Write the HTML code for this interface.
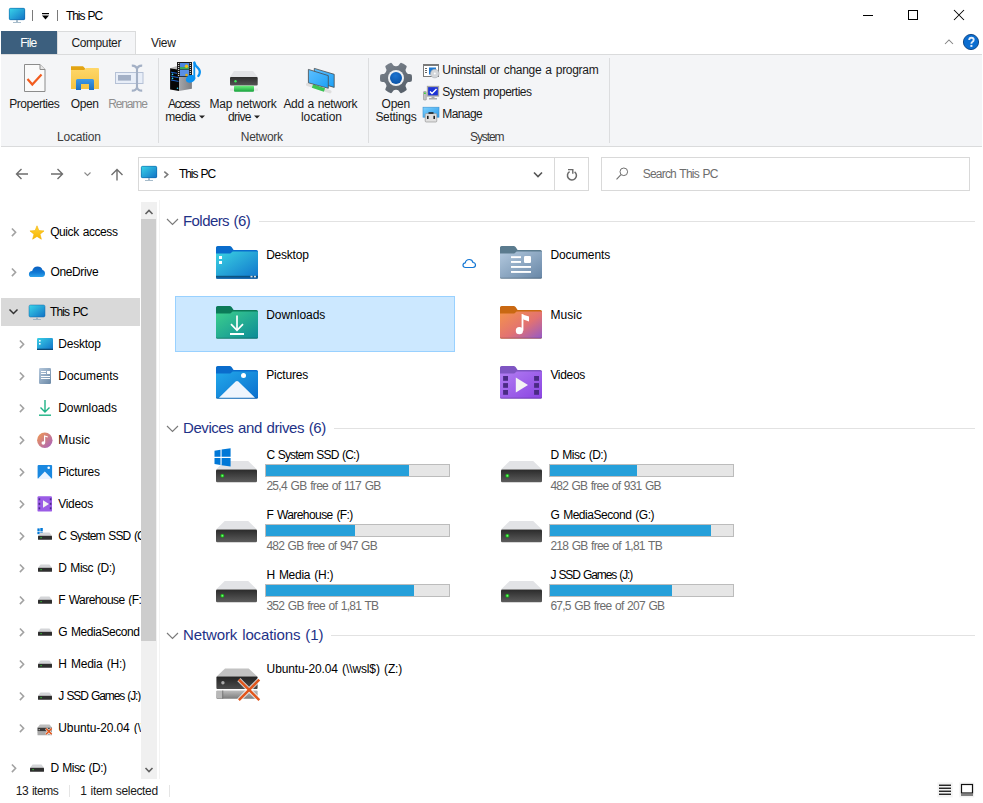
<!DOCTYPE html>
<html><head><meta charset="utf-8">
<style>
*{margin:0;padding:0;box-sizing:border-box}
html,body{width:983px;height:803px;overflow:hidden;background:#fff}
body{position:relative;font-family:"Liberation Sans",sans-serif;font-size:12px;color:#000}
.a{position:absolute}
.t{position:absolute;white-space:nowrap;font-family:"Liberation Sans",sans-serif}
svg{position:absolute;overflow:visible}
</style></head><body>
<svg style="left:0px;top:0px" width="120" height="30" viewBox="0 0 120 30">
<defs><linearGradient id="pcg" x1="0" y1="0" x2="1" y2="1"><stop offset="0" stop-color="#3ad6ea"/><stop offset="1" stop-color="#1170c4"/></linearGradient></defs>
<rect x="9" y="8" width="16" height="12" rx="1.5" fill="url(#pcg)"/>
<rect x="9.3" y="8.3" width="15.4" height="11.4" rx="1.3" fill="none" stroke="#1468a8" stroke-width="0.6"/>
<rect x="16" y="20" width="2" height="2" fill="#a7bccb"/>
<rect x="13" y="22" width="8" height="1" fill="#a7bccb"/>
<rect x="32" y="10" width="1" height="11" fill="#7a7a7a"/>
<rect x="42" y="13" width="7" height="1.2" fill="#000"/>
<path d="M42 15.5 L49 15.5 L45.5 19.5 Z" fill="#000"/>
<rect x="57" y="10" width="1" height="11" fill="#7a7a7a"/>
</svg>
<div class="t" style="left:66.00px;top:10px;font-size:12px;line-height:12px;color:#000;letter-spacing:-1.083px;word-spacing:1.00px;">This PC</div>
<svg style="left:850px;top:0px" width="133" height="30" viewBox="0 0 133 30">
<rect x="13" y="15" width="10" height="1" fill="#000"/>
<rect x="58.5" y="10.5" width="9" height="9" fill="none" stroke="#000" stroke-width="1"/>
<path d="M104 10 L114 20 M114 10 L104 20" stroke="#000" stroke-width="1.05"/>
</svg>
<div class="a" style="left:1px;top:31px;width:56px;height:23px;background:#3c5f7e;"></div>
<div class="t" style="left:20.30px;top:37px;font-size:12px;line-height:12px;color:#fff;letter-spacing:-0.833px;">File</div>
<div class="a" style="left:57px;top:31px;width:79px;height:24px;background:#f4f5f7;border:1px solid #dadbdc;border-bottom:none;"></div>
<div class="t" style="left:71.40px;top:37px;font-size:12px;line-height:12px;color:#1a1a1a;letter-spacing:-0.386px;">Computer</div>
<div class="t" style="left:151.00px;top:37px;font-size:12px;line-height:12px;color:#1a1a1a;letter-spacing:-0.333px;">View</div>
<svg style="left:930px;top:30px" width="53" height="24" viewBox="0 0 53 24">
<path d="M15 14 L19 10 L23 14" fill="none" stroke="#808080" stroke-width="1.05"/>
<circle cx="41" cy="12" r="7.6" fill="#0b6dd0" stroke="#083f80" stroke-width="0.9"/>
<path d="M39.2 10.1 Q39.2 7.7 41.4 7.7 Q43.7 7.7 43.7 9.8 Q43.7 11.2 42.3 12 Q41.4 12.5 41.4 13.8" fill="none" stroke="#e4eefa" stroke-width="1.9"/>
<rect x="40.4" y="14.9" width="2" height="2" fill="#e4eefa"/>
</svg>
<div class="a" style="left:1px;top:54px;width:981px;height:93px;background:#f4f5f7;border-top:1px solid #dadbdc;border-bottom:1px solid #dadbdc;"></div>
<div class="a" style="left:158px;top:58px;width:1px;height:85px;background:#dcdddf;"></div>
<div class="a" style="left:368px;top:58px;width:1px;height:85px;background:#dcdddf;"></div>
<div class="a" style="left:609px;top:58px;width:1px;height:85px;background:#dcdddf;"></div>
<svg style="left:20px;top:58px" width="30" height="40" viewBox="0 0 30 40">
<path d="M4.5 6.5 H20 L25 11.5 V33.5 H4.5 Z" fill="#fafafa" stroke="#8c8c8c" stroke-width="1"/>
<path d="M20 6.5 V11.5 H25" fill="#e6e6e6" stroke="#8c8c8c" stroke-width="1"/>
<path d="M7.5 21 L12.3 26.5 L21.5 16.5" fill="none" stroke="#f25c1e" stroke-width="2.2"/>
</svg>
<svg style="left:68px;top:62px" width="34" height="30" viewBox="0 0 34 30">
<defs><linearGradient id="opg" x1="0" y1="0" x2="0" y2="1"><stop offset="0" stop-color="#ffd76a"/><stop offset="1" stop-color="#f5c342"/></linearGradient>
<linearGradient id="opb" x1="0" y1="0" x2="0" y2="1"><stop offset="0" stop-color="#3e9ae8"/><stop offset="1" stop-color="#1f6fc0"/></linearGradient></defs>
<path d="M3 4.2 H15 L17.2 6.4 V8.5 H3 Z" fill="#e3a412"/>
<path d="M3 8 H16 L18.3 6 H30 Q31 6 31 7 V26.9 H3 Z" fill="url(#opg)"/>
<path d="M8 28 V18.5 Q8 17 9.5 17 H24.5 Q26 17 26 18.5 V28 H21 V22 H13 V28 Z" fill="url(#opb)"/>
</svg>
<svg style="left:112px;top:62px" width="34" height="32" viewBox="0 0 34 32">
<rect x="3.5" y="10.5" width="27.5" height="11" fill="#e8eef8" stroke="#b5c1d6" stroke-width="1"/>
<rect x="6" y="13" width="13" height="5.6" fill="#a3b0c6"/>
<path d="M19.8 3.6 Q24 3.4 25 7 Q26 3.4 30.2 3.6 M19.8 28.6 Q24 28.8 25 25.2 Q26 28.8 30.2 28.6 M25 6 V26" stroke="#a3b0c5" stroke-width="2.1" fill="none"/>
</svg>
<div class="t" style="left:9.30px;top:98px;font-size:12px;line-height:12px;color:#1a1a1a;letter-spacing:-0.478px;">Properties</div>
<div class="t" style="left:70.80px;top:98px;font-size:12px;line-height:12px;color:#1a1a1a;letter-spacing:-0.433px;">Open</div>
<div class="t" style="left:108.30px;top:98px;font-size:12px;line-height:12px;color:#8f8f8f;letter-spacing:-1.160px;">Rename</div>
<div class="t" style="left:57.00px;top:131px;font-size:12px;line-height:12px;color:#3b3b3b;letter-spacing:-0.200px;">Location</div>
<svg style="left:164px;top:58px" width="42" height="40" viewBox="0 0 42 40">
<defs><linearGradient id="amside" x1="0" y1="0" x2="1" y2="0"><stop offset="0" stop-color="#a4a6aa"/><stop offset="1" stop-color="#7c7e83"/></linearGradient></defs>
<path d="M6.1 10.2 L12 8.2 L27.9 9.5 L15.1 11.8 Z" fill="#b8b8b8"/>
<path d="M6.1 10.2 L15.1 11.8 L15.1 33.1 L6.1 31.5 Z" fill="#060606"/>
<path d="M15.1 11.8 L27.9 9.5 L27.9 30.7 L15.1 33.1 Z" fill="url(#amside)"/>
<path d="M7 14.2 L14.5 15.6 M7 18.2 L14.5 19.6 M7 22 L14.5 23.4" stroke="#1f6de0" stroke-width="0.9"/>
<circle cx="8.5" cy="16.4" r="0.8" fill="#36d2f5"/><circle cx="8.5" cy="20.4" r="0.8" fill="#36d2f5"/><circle cx="13.5" cy="30.3" r="0.8" fill="#36d2f5"/>
<rect x="13" y="4" width="15" height="15" fill="#1b1b1b"/>
<rect x="14.2" y="5" width="1" height="1" fill="#fff"/><rect x="14.2" y="7" width="1" height="1" fill="#fff"/><rect x="14.2" y="9" width="1" height="1" fill="#fff"/><rect x="14.2" y="11" width="1" height="1" fill="#fff"/><rect x="14.2" y="13" width="1" height="1" fill="#fff"/><rect x="14.2" y="15" width="1" height="1" fill="#fff"/><rect x="14.2" y="17" width="1" height="1" fill="#fff"/>
<rect x="25.8" y="5" width="1" height="1" fill="#fff"/><rect x="25.8" y="7" width="1" height="1" fill="#fff"/><rect x="25.8" y="9" width="1" height="1" fill="#fff"/><rect x="25.8" y="11" width="1" height="1" fill="#fff"/><rect x="25.8" y="13" width="1" height="1" fill="#fff"/><rect x="25.8" y="15" width="1" height="1" fill="#fff"/>
<rect x="16" y="5" width="9" height="6.3" fill="#4a86e0"/><rect x="16" y="12" width="9" height="6.2" fill="#5a90e4"/>
<rect x="16" y="9" width="9" height="2.3" fill="#3aa860"/><circle cx="22.5" cy="8.3" r="1.7" fill="#f0c010"/><circle cx="22.5" cy="17" r="1.3" fill="#e0b010"/>
<ellipse cx="26.6" cy="20.8" rx="4.9" ry="3.7" transform="rotate(-22 26.6 20.8)" fill="#0a92f2"/>
<rect x="29.4" y="4.2" width="1.8" height="17" fill="#0a92f2"/>
<path d="M30.3 4.5 Q31 7.5 34 10 Q36.5 12.5 35.6 15.5 Q35.2 17 34.3 18" fill="none" stroke="#0a92f2" stroke-width="2.3" stroke-linecap="round"/>
</svg>
<div class="t" style="left:168.00px;top:98px;font-size:12px;line-height:12px;color:#1a1a1a;letter-spacing:-1.280px;">Access</div>
<div class="t" style="left:165.30px;top:111px;font-size:12px;line-height:12px;color:#1a1a1a;letter-spacing:-0.500px;">media</div>
<svg style="left:197px;top:114px" width="10" height="6" viewBox="0 0 10 6"><path d="M2 1.5 H8 L5 4.5 Z" fill="#222"/></svg>
<svg style="left:226px;top:66px" width="36" height="30" viewBox="0 0 36 30">
<defs><linearGradient id="mnd" x1="0" y1="0" x2="0" y2="1"><stop offset="0" stop-color="#2e2e2e"/><stop offset="1" stop-color="#555"/></linearGradient>
<linearGradient id="mng" x1="0" y1="0" x2="0" y2="1"><stop offset="0" stop-color="#6cf07c"/><stop offset="1" stop-color="#16a03c"/></linearGradient></defs>
<path d="M8 5 H27 L31.7 11 H4 Z" fill="#e2e3e6"/>
<rect x="4" y="11" width="27.7" height="8.5" rx="1" fill="url(#mnd)"/>
<circle cx="9.5" cy="15.3" r="1.2" fill="#3ee85a"/>
<rect x="4" y="22.5" width="28" height="2.5" fill="#e8e8e8"/>
<rect x="8" y="19.8" width="20" height="6" rx="1" fill="url(#mng)"/>
</svg>
<div class="t" style="left:209.60px;top:98px;font-size:12px;line-height:12px;color:#1a1a1a;letter-spacing:-0.260px;word-spacing:1.00px;">Map network</div>
<div class="t" style="left:228.00px;top:111px;font-size:12px;line-height:12px;color:#1a1a1a;letter-spacing:-0.625px;">drive</div>
<svg style="left:252px;top:114px" width="10" height="6" viewBox="0 0 10 6"><path d="M2 1.5 H8 L5 4.5 Z" fill="#222"/></svg>
<svg style="left:302px;top:62px" width="40" height="34" viewBox="0 0 40 34">
<defs><linearGradient id="anl" x1="0" y1="0" x2="1" y2="1"><stop offset="0" stop-color="#5cc0ff"/><stop offset="0.5" stop-color="#3fb0fb"/><stop offset="1" stop-color="#1aa0f5"/></linearGradient></defs>
<path d="M12.3 6.4 L32.2 12.3 L32.2 25.4 L12.3 19.5 Z" fill="url(#anl)" stroke="#4a4a4a" stroke-width="0.8"/>
<path d="M5.5 22.6 L28 29.8" stroke="#dedede" stroke-width="3.2" stroke-linecap="round"/>
<path d="M10.5 24 L22.5 28" stroke="#3cc455" stroke-width="3.8"/>
<path d="M6.4 7.4 L26.3 13.6 L26.3 26.3 L6.4 20.8 Z" fill="url(#anl)" stroke="#4a4a4a" stroke-width="0.8"/>
</svg>
<div class="t" style="left:283.50px;top:98px;font-size:12px;line-height:12px;color:#1a1a1a;letter-spacing:-0.400px;word-spacing:1.00px;">Add a network</div>
<div class="t" style="left:301.00px;top:111px;font-size:12px;line-height:12px;color:#1a1a1a;letter-spacing:-0.057px;">location</div>
<div class="t" style="left:240.80px;top:131px;font-size:12px;line-height:12px;color:#3b3b3b;letter-spacing:-0.300px;">Network</div>
<svg style="left:378px;top:60px" width="36" height="36" viewBox="0 0 36 36">
<defs><linearGradient id="gear" x1="0" y1="0" x2="0.6" y2="1"><stop offset="0" stop-color="#7d858f"/><stop offset="1" stop-color="#58616b"/></linearGradient>
<radialGradient id="gb" cx="0.45" cy="0.3" r="0.75"><stop offset="0" stop-color="#1d74d0"/><stop offset="1" stop-color="#0a52a6"/></radialGradient></defs>
<path d="M34.00 18.00 L34.00 18.28 L33.99 18.56 L33.98 18.84 L33.96 19.12 L33.94 19.39 L33.91 19.67 L33.88 19.95 L33.84 20.23 L33.80 20.50 L33.76 20.78 L33.71 21.05 L33.56 21.31 L33.25 21.52 L32.78 21.69 L32.22 21.81 L31.60 21.90 L30.99 21.97 L30.42 22.04 L29.96 22.12 L29.64 22.24 L29.48 22.41 L29.32 22.58 L29.16 22.74 L29.01 22.90 L28.86 23.06 L28.71 23.22 L28.57 23.39 L28.45 23.55 L28.33 23.72 L28.22 23.90 L28.12 24.08 L28.03 24.27 L27.95 24.46 L27.88 24.66 L27.81 24.87 L27.75 25.08 L27.69 25.30 L27.62 25.52 L27.56 25.74 L27.49 25.96 L27.55 26.30 L27.71 26.74 L27.93 27.26 L28.18 27.83 L28.41 28.41 L28.58 28.96 L28.67 29.44 L28.65 29.82 L28.50 30.08 L28.28 30.26 L28.07 30.43 L27.85 30.61 L27.63 30.78 L27.40 30.94 L27.18 31.11 L26.95 31.26 L26.71 31.42 L26.48 31.57 L26.24 31.71 L26.00 31.86 L25.76 31.99 L25.51 32.13 L25.26 32.26 L25.01 32.38 L24.76 32.50 L24.51 32.62 L24.25 32.73 L23.99 32.83 L23.73 32.94 L23.47 33.04 L23.21 33.13 L22.92 33.13 L22.57 32.96 L22.20 32.65 L21.81 32.22 L21.42 31.73 L21.05 31.23 L20.72 30.78 L20.41 30.42 L20.15 30.20 L19.92 30.15 L19.70 30.09 L19.48 30.04 L19.26 29.98 L19.04 29.93 L18.83 29.89 L18.62 29.85 L18.41 29.82 L18.21 29.81 L18.00 29.80 L17.79 29.81 L17.59 29.82 L17.38 29.85 L17.17 29.89 L16.96 29.93 L16.74 29.98 L16.52 30.04 L16.30 30.09 L16.08 30.15 L15.85 30.20 L15.59 30.42 L15.28 30.78 L14.95 31.23 L14.58 31.73 L14.19 32.22 L13.80 32.65 L13.43 32.96 L13.08 33.13 L12.79 33.13 L12.53 33.04 L12.27 32.94 L12.01 32.83 L11.75 32.73 L11.49 32.62 L11.24 32.50 L10.99 32.38 L10.74 32.26 L10.49 32.13 L10.24 31.99 L10.00 31.86 L9.76 31.71 L9.52 31.57 L9.29 31.42 L9.05 31.26 L8.82 31.11 L8.60 30.94 L8.37 30.78 L8.15 30.61 L7.93 30.43 L7.72 30.26 L7.50 30.08 L7.35 29.82 L7.33 29.44 L7.42 28.96 L7.59 28.41 L7.82 27.83 L8.07 27.26 L8.29 26.74 L8.45 26.30 L8.51 25.96 L8.44 25.74 L8.38 25.52 L8.31 25.30 L8.25 25.08 L8.19 24.87 L8.12 24.66 L8.05 24.46 L7.97 24.27 L7.88 24.08 L7.78 23.90 L7.67 23.72 L7.55 23.55 L7.43 23.39 L7.29 23.22 L7.14 23.06 L6.99 22.90 L6.84 22.74 L6.68 22.58 L6.52 22.41 L6.36 22.24 L6.04 22.12 L5.58 22.04 L5.01 21.97 L4.40 21.90 L3.78 21.81 L3.22 21.69 L2.75 21.52 L2.44 21.31 L2.29 21.05 L2.24 20.78 L2.20 20.50 L2.16 20.23 L2.12 19.95 L2.09 19.67 L2.06 19.39 L2.04 19.12 L2.02 18.84 L2.01 18.56 L2.00 18.28 L2.00 18.00 L2.00 17.72 L2.01 17.44 L2.02 17.16 L2.04 16.88 L2.06 16.61 L2.09 16.33 L2.12 16.05 L2.16 15.77 L2.20 15.50 L2.24 15.22 L2.29 14.95 L2.44 14.69 L2.75 14.48 L3.22 14.31 L3.78 14.19 L4.40 14.10 L5.01 14.03 L5.58 13.96 L6.04 13.88 L6.36 13.76 L6.52 13.59 L6.68 13.42 L6.84 13.26 L6.99 13.10 L7.14 12.94 L7.29 12.78 L7.43 12.61 L7.55 12.45 L7.67 12.28 L7.78 12.10 L7.88 11.92 L7.97 11.73 L8.05 11.54 L8.12 11.34 L8.19 11.13 L8.25 10.92 L8.31 10.70 L8.38 10.48 L8.44 10.26 L8.51 10.04 L8.45 9.70 L8.29 9.26 L8.07 8.74 L7.82 8.17 L7.59 7.59 L7.42 7.04 L7.33 6.56 L7.35 6.18 L7.50 5.92 L7.72 5.74 L7.93 5.57 L8.15 5.39 L8.37 5.22 L8.60 5.06 L8.82 4.89 L9.05 4.74 L9.29 4.58 L9.52 4.43 L9.76 4.29 L10.00 4.14 L10.24 4.01 L10.49 3.87 L10.74 3.74 L10.99 3.62 L11.24 3.50 L11.49 3.38 L11.75 3.27 L12.01 3.17 L12.27 3.06 L12.53 2.96 L12.79 2.87 L13.08 2.87 L13.43 3.04 L13.80 3.35 L14.19 3.78 L14.58 4.27 L14.95 4.77 L15.28 5.22 L15.59 5.58 L15.85 5.80 L16.08 5.85 L16.30 5.91 L16.52 5.96 L16.74 6.02 L16.96 6.07 L17.17 6.11 L17.38 6.15 L17.59 6.18 L17.79 6.19 L18.00 6.20 L18.21 6.19 L18.41 6.18 L18.62 6.15 L18.83 6.11 L19.04 6.07 L19.26 6.02 L19.48 5.96 L19.70 5.91 L19.92 5.85 L20.15 5.80 L20.41 5.58 L20.72 5.22 L21.05 4.77 L21.42 4.27 L21.81 3.78 L22.20 3.35 L22.57 3.04 L22.92 2.87 L23.21 2.87 L23.47 2.96 L23.73 3.06 L23.99 3.17 L24.25 3.27 L24.51 3.38 L24.76 3.50 L25.01 3.62 L25.26 3.74 L25.51 3.87 L25.76 4.01 L26.00 4.14 L26.24 4.29 L26.48 4.43 L26.71 4.58 L26.95 4.74 L27.18 4.89 L27.40 5.06 L27.63 5.22 L27.85 5.39 L28.07 5.57 L28.28 5.74 L28.50 5.92 L28.65 6.18 L28.67 6.56 L28.58 7.04 L28.41 7.59 L28.18 8.17 L27.93 8.74 L27.71 9.26 L27.55 9.70 L27.49 10.04 L27.56 10.26 L27.62 10.48 L27.69 10.70 L27.75 10.92 L27.81 11.13 L27.88 11.34 L27.95 11.54 L28.03 11.73 L28.12 11.92 L28.22 12.10 L28.33 12.28 L28.45 12.45 L28.57 12.61 L28.71 12.78 L28.86 12.94 L29.01 13.10 L29.16 13.26 L29.32 13.42 L29.48 13.59 L29.64 13.76 L29.96 13.88 L30.42 13.96 L30.99 14.03 L31.60 14.10 L32.22 14.19 L32.78 14.31 L33.25 14.48 L33.56 14.69 L33.71 14.95 L33.76 15.22 L33.80 15.50 L33.84 15.77 L33.88 16.05 L33.91 16.33 L33.94 16.61 L33.96 16.88 L33.98 17.16 L33.99 17.44 L34.00 17.72 Z" fill="url(#gear)"/>
<circle cx="18" cy="18" r="8.0" fill="#eef0f2"/>
<circle cx="18" cy="18" r="6.0" fill="url(#gb)"/>
</svg>
<div class="t" style="left:381.60px;top:98px;font-size:12px;line-height:12px;color:#1a1a1a;letter-spacing:-0.300px;">Open</div>
<div class="t" style="left:375.40px;top:111px;font-size:12px;line-height:12px;color:#1a1a1a;letter-spacing:-0.286px;">Settings</div>
<svg style="left:420px;top:62px" width="22" height="62" viewBox="0 0 22 62">
<rect x="3.5" y="2.5" width="15" height="12" fill="#fff" stroke="#7a7a7a" stroke-width="1"/>
<rect x="3" y="2" width="16" height="2" fill="#7a7a7a"/>
<rect x="5" y="6" width="2" height="1" fill="#666"/><rect x="5" y="8" width="2" height="1" fill="#666"/><rect x="5" y="10" width="2" height="1" fill="#666"/>
<rect x="9" y="5.5" width="7" height="7" fill="#1e78d0"/>
<circle cx="14.8" cy="11.6" r="4.3" fill="#d3d6da" stroke="#a0a5aa" stroke-width="0.5"/>
<circle cx="14.8" cy="11.6" r="1" fill="#fff"/>
<rect x="3.5" y="29.5" width="2.8" height="8.5" rx="0.5" fill="#c4c4c4" stroke="#808080" stroke-width="0.5"/>
<rect x="4" y="30.5" width="1.8" height="1.5" fill="#3ecf3e"/>
<rect x="7.5" y="24.5" width="11" height="9.5" fill="#1c32d6" stroke="#a8a8a8" stroke-width="1.3"/>
<path d="M10 29.5 L12 31.5 L16.5 27" stroke="#fff" stroke-width="1.4" fill="none"/>
<rect x="11.5" y="34.5" width="3" height="1.5" fill="#aaa"/>
<rect x="9" y="36" width="8" height="1.5" fill="#aaa"/>
<defs><linearGradient id="mgs" x1="0" y1="0" x2="1" y2="1"><stop offset="0" stop-color="#7fd2ff"/><stop offset="1" stop-color="#2b9ae8"/></linearGradient></defs>
<rect x="3" y="45.2" width="16" height="10" fill="url(#mgs)" stroke="#3a8fd0" stroke-width="0.6"/>
<rect x="5.2" y="51.6" width="11.6" height="8.4" rx="1" fill="#e0e0e0" stroke="#8a8a8a" stroke-width="0.6"/>
<rect x="8.5" y="50.2" width="5" height="1.6" fill="#222"/>
<rect x="7" y="53.8" width="1.6" height="3.2" fill="#222"/><rect x="13.4" y="53.8" width="1.6" height="3.2" fill="#222"/>
</svg>
<div class="t" style="left:442.30px;top:64px;font-size:12px;line-height:12px;color:#1a1a1a;letter-spacing:-0.300px;word-spacing:1.00px;">Uninstall or change a program</div>
<div class="t" style="left:442.30px;top:86px;font-size:12px;line-height:12px;color:#1a1a1a;letter-spacing:-0.500px;word-spacing:1.00px;">System properties</div>
<div class="t" style="left:442.30px;top:108px;font-size:12px;line-height:12px;color:#1a1a1a;letter-spacing:-0.600px;">Manage</div>
<div class="t" style="left:470.00px;top:131px;font-size:12px;line-height:12px;color:#3b3b3b;letter-spacing:-1.080px;">System</div>
<svg style="left:0px;top:150px" width="135" height="45" viewBox="0 0 135 45">
<path d="M16.5 24 H28 M21.5 19 L16.5 24 L21.5 29" fill="none" stroke="#6e6e6e" stroke-width="1.4"/>
<path d="M51 24 H62.5 M57.5 19 L62.5 24 L57.5 29" fill="none" stroke="#6e6e6e" stroke-width="1.4"/>
<path d="M84.5 22.5 L87.5 25.5 L90.5 22.5" fill="none" stroke="#8a8a8a" stroke-width="1.1"/>
<path d="M117 19.5 V30.5 M111.5 25 L117 19.5 L122.5 25" fill="none" stroke="#6e6e6e" stroke-width="1.4"/>
</svg>
<div class="a" style="left:138px;top:157px;width:451px;height:34px;background:#fff;border:1px solid #d9d9d9;"></div>
<div class="a" style="left:554px;top:158px;width:1px;height:32px;background:#d9d9d9;"></div>
<svg style="left:138px;top:157px" width="90" height="34" viewBox="0 0 90 34">
<defs><linearGradient id="pcg2" x1="0" y1="0" x2="1" y2="1"><stop offset="0" stop-color="#3ad6ea"/><stop offset="1" stop-color="#1170c4"/></linearGradient></defs>
<rect x="3" y="9" width="16" height="12" rx="1.5" fill="url(#pcg2)"/>
<rect x="3.3" y="9.3" width="15.4" height="11.4" rx="1.3" fill="none" stroke="#1468a8" stroke-width="0.6"/>
<rect x="10" y="21" width="2" height="2" fill="#a7bccb"/>
<rect x="7" y="23" width="8" height="1" fill="#a7bccb"/>
<path d="M26.3 14.6 L29.8 17.6 L26.3 20.6" fill="none" stroke="#7a7a7a" stroke-width="1.5"/>
</svg>
<div class="t" style="left:179.00px;top:168px;font-size:12px;line-height:12px;color:#000;letter-spacing:-1.083px;word-spacing:1.00px;">This PC</div>
<svg style="left:520px;top:157px" width="70" height="34" viewBox="0 0 70 34">
<path d="M14 15.5 L18 19.5 L22 15.5" fill="none" stroke="#555" stroke-width="1.6"/>
<path d="M54.6 14.8 A4.5 4.5 0 1 1 49.6 14.6" fill="none" stroke="#6a6a6a" stroke-width="1.5"/>
<path d="M48 12.6 H52.8 V16.8" fill="none" stroke="#6a6a6a" stroke-width="1.4"/>
</svg>
<div class="a" style="left:601px;top:157px;width:369px;height:34px;background:#fff;border:1px solid #d9d9d9;"></div>
<svg style="left:610px;top:160px" width="24" height="26" viewBox="0 0 24 26">
<circle cx="13.8" cy="11.8" r="3.8" fill="none" stroke="#707070" stroke-width="1"/>
<path d="M11 14.6 L6.5 19.3" stroke="#707070" stroke-width="1.1"/>
</svg>
<div class="t" style="left:642.70px;top:168px;font-size:12px;line-height:12px;color:#6d6d6d;letter-spacing:-0.785px;word-spacing:1.00px;">Search This PC</div>
<div class="a" style="left:141px;top:202px;width:16px;height:577px;background:#f0f0f0;"></div>
<div class="a" style="left:141px;top:219px;width:15px;height:422px;background:#cdcdcd;"></div>
<svg style="left:141px;top:202px" width="16" height="577" viewBox="0 0 16 577">
<path d="M4.5 12 L8 8.5 L11.5 12" fill="none" stroke="#606060" stroke-width="1.6"/>
<path d="M4.5 566 L8 569.5 L11.5 566" fill="none" stroke="#606060" stroke-width="1.6"/>
</svg>
<div class="a" style="left:159px;top:200px;width:1px;height:579px;background:#f3f3f3;"></div>
<div class="a" style="left:1px;top:298px;width:139px;height:28px;background:#d9d9d9;"></div>
<svg style="left:0px;top:0px" width="141" height="803" viewBox="0 0 141 803"><path d="M11.9 228.5 L15.6 232.3 L11.9 236.10000000000002" fill="none" stroke="#a2a2a2" stroke-width="1.6"/><path d="M11.9 268.5 L15.6 272.3 L11.9 276.1" fill="none" stroke="#a2a2a2" stroke-width="1.6"/><path d="M11.9 764.5 L15.6 768.3 L11.9 772.0999999999999" fill="none" stroke="#a2a2a2" stroke-width="1.6"/><path d="M9.5 309.5 L13.5 313.5 L17.5 309.5" fill="none" stroke="#333" stroke-width="1.5"/><path d="M19.9 340.5 L23.6 344.3 L19.9 348.1" fill="none" stroke="#a2a2a2" stroke-width="1.6"/><path d="M19.9 372.5 L23.6 376.3 L19.9 380.1" fill="none" stroke="#a2a2a2" stroke-width="1.6"/><path d="M19.9 404.5 L23.6 408.3 L19.9 412.1" fill="none" stroke="#a2a2a2" stroke-width="1.6"/><path d="M19.9 436.5 L23.6 440.3 L19.9 444.1" fill="none" stroke="#a2a2a2" stroke-width="1.6"/><path d="M19.9 468.5 L23.6 472.3 L19.9 476.1" fill="none" stroke="#a2a2a2" stroke-width="1.6"/><path d="M19.9 500.5 L23.6 504.3 L19.9 508.1" fill="none" stroke="#a2a2a2" stroke-width="1.6"/><path d="M19.9 532.5 L23.6 536.3 L19.9 540.0999999999999" fill="none" stroke="#a2a2a2" stroke-width="1.6"/><path d="M19.9 564.5 L23.6 568.3 L19.9 572.0999999999999" fill="none" stroke="#a2a2a2" stroke-width="1.6"/><path d="M19.9 596.5 L23.6 600.3 L19.9 604.0999999999999" fill="none" stroke="#a2a2a2" stroke-width="1.6"/><path d="M19.9 628.5 L23.6 632.3 L19.9 636.0999999999999" fill="none" stroke="#a2a2a2" stroke-width="1.6"/><path d="M19.9 660.5 L23.6 664.3 L19.9 668.0999999999999" fill="none" stroke="#a2a2a2" stroke-width="1.6"/><path d="M19.9 692.5 L23.6 696.3 L19.9 700.0999999999999" fill="none" stroke="#a2a2a2" stroke-width="1.6"/><path d="M19.9 724.5 L23.6 728.3 L19.9 732.0999999999999" fill="none" stroke="#a2a2a2" stroke-width="1.6"/></svg>
<svg style="left:0px;top:0px" width="141" height="803" viewBox="0 0 141 803"><defs><linearGradient id="star" x1="0" y1="0" x2="0" y2="1"><stop offset="0" stop-color="#ffd43b"/><stop offset="1" stop-color="#f7b500"/></linearGradient></defs><path d="M37.00 225.80 L38.88 230.61 L44.04 230.91 L40.04 234.19 L41.35 239.19 L37.00 236.40 L32.65 239.19 L33.96 234.19 L29.96 230.91 L35.12 230.61 Z" fill="url(#star)" stroke="#f2b200" stroke-width="0.6" stroke-linejoin="round"/><defs><linearGradient id="od" x1="0" y1="0" x2="0" y2="1"><stop offset="0" stop-color="#0a5fc0"/><stop offset="0.55" stop-color="#0f78d4"/><stop offset="1" stop-color="#2ea2ea"/></linearGradient></defs><path d="M31.4 277 Q28.9 277 28.9 274.2 Q28.9 271.3 32.1 270.9 Q33.5 266.6 37.6 266.6 Q41.2 266.6 42.5 269.9 Q45 270.4 45 273.6 Q45 277 42 277 Z" fill="url(#od)"/><defs><linearGradient id="pcg3" x1="0" y1="0" x2="1" y2="1"><stop offset="0" stop-color="#3ad6ea"/><stop offset="1" stop-color="#1170c4"/></linearGradient></defs><rect x="29" y="305" width="16" height="12" rx="1.5" fill="url(#pcg3)" stroke="#1468a8" stroke-width="0.5"/><rect x="36" y="317" width="2" height="2" fill="#9fb3c2"/><rect x="33" y="319" width="8" height="1" fill="#9fb3c2"/><defs><linearGradient id="dsk" x1="0" y1="0" x2="1" y2="1"><stop offset="0" stop-color="#3ad0e6"/><stop offset="1" stop-color="#1070c8"/></linearGradient></defs><rect x="37" y="338" width="16" height="12" rx="1.2" fill="url(#dsk)"/><rect x="37" y="348.7" width="16" height="1.3" fill="#0c4a78"/><rect x="39" y="340" width="1.6" height="1.6" fill="#fff"/><rect x="39" y="343" width="1.6" height="1.6" fill="#fff"/><defs><linearGradient id="dcs" x1="0" y1="0" x2="1" y2="1"><stop offset="0" stop-color="#b5c8dc"/><stop offset="1" stop-color="#6a88a6"/></linearGradient></defs><rect x="39" y="368" width="12" height="16" rx="1.3" fill="url(#dcs)"/><rect x="41" y="371" width="5" height="1" fill="#fff"/><rect x="41" y="373" width="5" height="1" fill="#fff"/><rect x="47" y="371" width="3" height="3" fill="#fff"/><rect x="41" y="376" width="9" height="1" fill="#fff"/><rect x="41" y="378" width="9" height="1" fill="#fff"/><path d="M45 400 V412 M40.5 407.5 L45 412 L49.5 407.5" fill="none" stroke="#1fb386" stroke-width="1.4"/><rect x="39" y="414.5" width="12" height="1.4" fill="#1fb386"/><defs><linearGradient id="msc" x1="0" y1="0" x2="1" y2="1"><stop offset="0" stop-color="#f39a4c"/><stop offset="1" stop-color="#a55fc4"/></linearGradient></defs><circle cx="44.8" cy="440.2" r="7.7" fill="url(#msc)"/><circle cx="43.3" cy="443" r="1.8" fill="#fff"/><path d="M44.6 443 V436 L47.8 437" fill="none" stroke="#fff" stroke-width="1.2"/><rect x="37.6" y="465" width="14.5" height="14" rx="1" fill="#1a88e0"/><path d="M37.6 479 L44.8 471.5 L52.1 479 Z" fill="#eaf3ff"/><circle cx="48.7" cy="467.8" r="1.3" fill="#fff"/><rect x="37.5" y="496.3" width="14.5" height="15.3" rx="1.2" fill="#9b5ce6"/><path d="M43 500.3 V507.8 L49 504 Z" fill="#f2f2f2"/><rect x="38.6" y="498.3" width="1.6" height="2" fill="#4b2b88"/><rect x="38.6" y="502.8" width="1.6" height="2" fill="#4b2b88"/><rect x="38.6" y="507.3" width="1.6" height="2" fill="#4b2b88"/><rect x="49.8" y="498.3" width="1.6" height="2" fill="#4b2b88"/><rect x="49.8" y="502.8" width="1.6" height="2" fill="#4b2b88"/><rect x="49.8" y="507.3" width="1.6" height="2" fill="#4b2b88"/><rect x="37.4" y="528.4" width="2.3" height="2.6" fill="#0078d7"/><rect x="40.3" y="528" width="2.5" height="3" fill="#0078d7"/><rect x="37.4" y="531.6" width="2.3" height="2.6" fill="#0078d7"/><rect x="40.3" y="531.6" width="2.5" height="3" fill="#0078d7"/><path d="M40.5 532.5 H49.5 L52 535.8 H38 Z" fill="#d4d5d8"/><rect x="38" y="535.8" width="14" height="4" rx="0.5" fill="#2e2e2e"/><rect x="40.5" y="537" width="1.2" height="1.2" fill="#3c3"/><path d="M40.5 564.5 H49.5 L52 567.8 H38 Z" fill="#d4d5d8"/><rect x="38" y="567.8" width="14" height="4" rx="0.5" fill="#2e2e2e"/><rect x="40.5" y="569" width="1.2" height="1.2" fill="#3c3"/><path d="M40.5 596.5 H49.5 L52 599.8 H38 Z" fill="#d4d5d8"/><rect x="38" y="599.8" width="14" height="4" rx="0.5" fill="#2e2e2e"/><rect x="40.5" y="601" width="1.2" height="1.2" fill="#3c3"/><path d="M40.5 628.5 H49.5 L52 631.8 H38 Z" fill="#d4d5d8"/><rect x="38" y="631.8" width="14" height="4" rx="0.5" fill="#2e2e2e"/><rect x="40.5" y="633" width="1.2" height="1.2" fill="#3c3"/><path d="M40.5 660.5 H49.5 L52 663.8 H38 Z" fill="#d4d5d8"/><rect x="38" y="663.8" width="14" height="4" rx="0.5" fill="#2e2e2e"/><rect x="40.5" y="665" width="1.2" height="1.2" fill="#3c3"/><path d="M40.5 692.5 H49.5 L52 695.8 H38 Z" fill="#d4d5d8"/><rect x="38" y="695.8" width="14" height="4" rx="0.5" fill="#2e2e2e"/><rect x="40.5" y="697" width="1.2" height="1.2" fill="#3c3"/><path d="M40 724.5 H49.5 L52 727.6 H37.5 Z" fill="#bdbdbd"/><rect x="37.5" y="727.6" width="14.5" height="3.9" fill="#3a3a3a"/><rect x="38.6" y="729" width="1.2" height="1.2" fill="#bbb"/><rect x="37.5" y="731.7" width="14.5" height="3.5" rx="0.5" fill="#a9a9a9"/><path d="M46 728.5 L51.7 734.2 M51.7 728.5 L46 734.2" stroke="#fff" stroke-width="2.8" opacity="0.8"/><path d="M46 728.5 L51.7 734.2 M51.7 728.5 L46 734.2" stroke="#e2561c" stroke-width="1.6"/><path d="M32.5 764.5 H41.5 L44 767.8 H30 Z" fill="#d4d5d8"/><rect x="30" y="767.8" width="14" height="4" rx="0.5" fill="#2e2e2e"/><rect x="32.5" y="769" width="1.2" height="1.2" fill="#3c3"/></svg>
<div class="t" style="left:50.20px;top:226px;font-size:12px;line-height:12px;color:#000;letter-spacing:-0.418px;word-spacing:1.00px;">Quick access</div>
<div class="t" style="left:50.50px;top:266px;font-size:12px;line-height:12px;color:#000;letter-spacing:-0.371px;">OneDrive</div>
<div class="t" style="left:50.00px;top:306px;font-size:12px;line-height:12px;color:#000;letter-spacing:-0.867px;word-spacing:1.00px;">This PC</div>
<div class="t" style="left:58.30px;top:338px;font-size:12px;line-height:12px;color:#000;letter-spacing:-0.250px;">Desktop</div>
<div class="t" style="left:58.30px;top:370px;font-size:12px;line-height:12px;color:#000;letter-spacing:-0.075px;">Documents</div>
<div class="t" style="left:58.30px;top:402px;font-size:12px;line-height:12px;color:#000;letter-spacing:-0.088px;">Downloads</div>
<div class="t" style="left:58.30px;top:434px;font-size:12px;line-height:12px;color:#000;letter-spacing:0.100px;">Music</div>
<div class="t" style="left:58.30px;top:466px;font-size:12px;line-height:12px;color:#000;letter-spacing:-0.243px;">Pictures</div>
<div class="t" style="left:58.30px;top:498px;font-size:12px;line-height:12px;color:#000;letter-spacing:-0.320px;">Videos</div>
<div class="t" style="left:58.30px;top:530px;font-size:12px;line-height:12px;color:#000;letter-spacing:-0.825px;word-spacing:1.00px;width:82.7px;overflow:hidden;">C System SSD (C:)</div>
<div class="t" style="left:58.30px;top:562px;font-size:12px;line-height:12px;color:#000;letter-spacing:-0.470px;word-spacing:1.00px;">D Misc (D:)</div>
<div class="t" style="left:58.30px;top:594px;font-size:12px;line-height:12px;color:#000;letter-spacing:-0.573px;word-spacing:1.00px;width:82.7px;overflow:hidden;">F Warehouse (F:)</div>
<div class="t" style="left:58.30px;top:626px;font-size:12px;line-height:12px;color:#000;letter-spacing:-0.459px;word-spacing:1.00px;width:82.7px;overflow:hidden;">G MediaSecond (G:)</div>
<div class="t" style="left:58.30px;top:658px;font-size:12px;line-height:12px;color:#000;letter-spacing:-0.209px;word-spacing:1.00px;">H Media (H:)</div>
<div class="t" style="left:58.30px;top:690px;font-size:12px;line-height:12px;color:#000;letter-spacing:-1.113px;word-spacing:1.00px;width:82.7px;overflow:hidden;">J SSD Games (J:)</div>
<div class="t" style="left:58.30px;top:722px;font-size:12px;line-height:12px;color:#000;letter-spacing:-0.120px;word-spacing:1.00px;width:82.7px;overflow:hidden;">Ubuntu-20.04 (\\wsl$) (Z:)</div>
<div class="t" style="left:50.40px;top:762px;font-size:12px;line-height:12px;color:#000;letter-spacing:-0.540px;word-spacing:1.00px;">D Misc (D:)</div>
<svg style="left:160px;top:214px" width="20" height="14"><path d="M7 5 L12.5 10.5 L18 5" fill="none" stroke="#7a7a7a" stroke-width="1.15"/></svg>
<div class="t" style="left:183.00px;top:213px;font-size:15px;line-height:15px;color:#1e3287;letter-spacing:-0.570px;word-spacing:1.00px;">Folders (6)</div>
<div class="a" style="left:259px;top:221px;width:716px;height:1px;background:#e2e2e2;"></div>
<svg style="left:160px;top:421px" width="20" height="14"><path d="M7 5 L12.5 10.5 L18 5" fill="none" stroke="#7a7a7a" stroke-width="1.15"/></svg>
<div class="t" style="left:183.00px;top:420px;font-size:15px;line-height:15px;color:#1e3287;letter-spacing:-0.429px;word-spacing:1.00px;">Devices and drives (6)</div>
<div class="a" style="left:334px;top:428px;width:641px;height:1px;background:#e2e2e2;"></div>
<svg style="left:160px;top:628px" width="20" height="14"><path d="M7 5 L12.5 10.5 L18 5" fill="none" stroke="#7a7a7a" stroke-width="1.15"/></svg>
<div class="t" style="left:183.00px;top:627px;font-size:15px;line-height:15px;color:#1e3287;letter-spacing:-0.125px;word-spacing:1.00px;">Network locations (1)</div>
<div class="a" style="left:331px;top:635px;width:644px;height:1px;background:#e2e2e2;"></div>
<div class="a" style="left:175px;top:296px;width:280px;height:56px;background:#cce8ff;border:1px solid #99d1ff;"></div>
<svg style="left:216px;top:246px" width="42" height="33" viewBox="0 0 42 33"><defs><linearGradient id="fdesk" x1="0" y1="0" x2="1" y2="1"><stop offset="0" stop-color="#3cd3e2"/><stop offset="1" stop-color="#0f74cc"/></linearGradient></defs>
<path d="M1.6 0 H13.5 Q14.8 0 15.6 1.1 L17.6 4 H40.4 Q42 4 42 5.6 V31 Q42 32.6 40.4 32.6 H1.6 Q0 32.6 0 31 V1.6 Q0 0 1.6 0 Z" fill="#0a6ccc"/>
<path d="M0 7.6 H13.2 Q14.3 7.6 15.2 6.7 L16.6 5.4 H42 V31 Q42 32.6 40.4 32.6 H1.6 Q0 32.6 0 31 Z" fill="url(#fdesk)"/>
<path d="M0 30.8 Q0 32.6 1.6 32.6 H40.4 Q42 32.6 42 30.8 V31.6 Q42 32.6 40.4 32.6 H1.6 Q0 32.6 0 31.6 Z" fill="#000" opacity="0.2"/>
<rect x="0.5" y="31.6" width="41" height="1" fill="#000" opacity="0.18"/>
<rect x="0" y="29.8" width="42" height="1.6" fill="#0b4a72" opacity="0.85"/><rect x="0.3" y="31.2" width="41.4" height="1.4" fill="#0b5aa0"/><rect x="3" y="10" width="3" height="3" fill="#fff"/><rect x="3" y="15" width="3" height="3" fill="#fff"/><rect x="34.5" y="29.8" width="2" height="1.6" fill="#ddd"/><rect x="38" y="29.8" width="2" height="1.6" fill="#ddd"/></svg>
<svg style="left:500px;top:246px" width="42" height="33" viewBox="0 0 42 33"><defs><linearGradient id="fdoc" x1="0" y1="0" x2="1" y2="1"><stop offset="0" stop-color="#b3c9de"/><stop offset="1" stop-color="#6786a6"/></linearGradient></defs>
<path d="M1.6 0 H13.5 Q14.8 0 15.6 1.1 L17.6 4 H40.4 Q42 4 42 5.6 V31 Q42 32.6 40.4 32.6 H1.6 Q0 32.6 0 31 V1.6 Q0 0 1.6 0 Z" fill="#5b7b8e"/>
<path d="M0 7.6 H13.2 Q14.3 7.6 15.2 6.7 L16.6 5.4 H42 V31 Q42 32.6 40.4 32.6 H1.6 Q0 32.6 0 31 Z" fill="url(#fdoc)"/>
<path d="M0 30.8 Q0 32.6 1.6 32.6 H40.4 Q42 32.6 42 30.8 V31.6 Q42 32.6 40.4 32.6 H1.6 Q0 32.6 0 31.6 Z" fill="#000" opacity="0.2"/>
<rect x="0.5" y="31.6" width="41" height="1" fill="#000" opacity="0.18"/>
<rect x="11" y="10.2" width="10" height="1.9" fill="#fff"/><rect x="11" y="15" width="10" height="1.9" fill="#fff"/><rect x="11" y="20" width="20" height="1.9" fill="#fff"/><rect x="11" y="25" width="20" height="1.9" fill="#fff"/><rect x="24" y="10" width="7" height="7" rx="1.2" fill="#fff"/></svg>
<svg style="left:216px;top:306px" width="42" height="33" viewBox="0 0 42 33"><defs><linearGradient id="fdl" x1="0" y1="0" x2="1" y2="1"><stop offset="0" stop-color="#3dd08c"/><stop offset="1" stop-color="#0c8a98"/></linearGradient></defs>
<path d="M1.6 0 H13.5 Q14.8 0 15.6 1.1 L17.6 4 H40.4 Q42 4 42 5.6 V31 Q42 32.6 40.4 32.6 H1.6 Q0 32.6 0 31 V1.6 Q0 0 1.6 0 Z" fill="#0b7a58"/>
<path d="M0 7.6 H13.2 Q14.3 7.6 15.2 6.7 L16.6 5.4 H42 V31 Q42 32.6 40.4 32.6 H1.6 Q0 32.6 0 31 Z" fill="url(#fdl)"/>
<path d="M0 30.8 Q0 32.6 1.6 32.6 H40.4 Q42 32.6 42 30.8 V31.6 Q42 32.6 40.4 32.6 H1.6 Q0 32.6 0 31.6 Z" fill="#000" opacity="0.2"/>
<rect x="0.5" y="31.6" width="41" height="1" fill="#000" opacity="0.18"/>
<path d="M21 9.6 V24" stroke="#fff" stroke-width="1.7"/><path d="M15 18.2 L21 24.4 L27 18.2" fill="none" stroke="#fff" stroke-width="1.7"/><rect x="14" y="27" width="14" height="2" fill="#fff"/></svg>
<svg style="left:500px;top:306px" width="42" height="33" viewBox="0 0 42 33"><defs><linearGradient id="fmus" x1="0" y1="0" x2="1" y2="1"><stop offset="0" stop-color="#f5944a"/><stop offset="0.55" stop-color="#e27272"/><stop offset="1" stop-color="#9459c8"/></linearGradient></defs>
<path d="M1.6 0 H13.5 Q14.8 0 15.6 1.1 L17.6 4 H40.4 Q42 4 42 5.6 V31 Q42 32.6 40.4 32.6 H1.6 Q0 32.6 0 31 V1.6 Q0 0 1.6 0 Z" fill="#c96812"/>
<path d="M0 7.6 H13.2 Q14.3 7.6 15.2 6.7 L16.6 5.4 H42 V31 Q42 32.6 40.4 32.6 H1.6 Q0 32.6 0 31 Z" fill="url(#fmus)"/>
<path d="M0 30.8 Q0 32.6 1.6 32.6 H40.4 Q42 32.6 42 30.8 V31.6 Q42 32.6 40.4 32.6 H1.6 Q0 32.6 0 31.6 Z" fill="#000" opacity="0.2"/>
<rect x="0.5" y="31.6" width="41" height="1" fill="#000" opacity="0.18"/>
<circle cx="19.4" cy="24.7" r="3.6" fill="#fff"/><rect x="21.6" y="8.2" width="1.8" height="16.5" fill="#fff"/><path d="M21.6 8.2 L29 10.6 V15.4 L23.4 13.6 Z" fill="#fff"/></svg>
<svg style="left:216px;top:366px" width="42" height="33" viewBox="0 0 42 33"><defs><linearGradient id="fpic" x1="0" y1="0" x2="1" y2="1"><stop offset="0" stop-color="#22a8ea"/><stop offset="1" stop-color="#0b6fce"/></linearGradient></defs>
<path d="M1.6 0 H13.5 Q14.8 0 15.6 1.1 L17.6 4 H40.4 Q42 4 42 5.6 V31 Q42 32.6 40.4 32.6 H1.6 Q0 32.6 0 31 V1.6 Q0 0 1.6 0 Z" fill="#0a6ccc"/>
<path d="M0 7.6 H13.2 Q14.3 7.6 15.2 6.7 L16.6 5.4 H42 V31 Q42 32.6 40.4 32.6 H1.6 Q0 32.6 0 31 Z" fill="url(#fpic)"/>
<path d="M0 30.8 Q0 32.6 1.6 32.6 H40.4 Q42 32.6 42 30.8 V31.6 Q42 32.6 40.4 32.6 H1.6 Q0 32.6 0 31.6 Z" fill="#000" opacity="0.2"/>
<rect x="0.5" y="31.6" width="41" height="1" fill="#000" opacity="0.18"/>
<circle cx="27.5" cy="9.5" r="2.5" fill="#fff"/><path d="M3 31.8 L19.6 15.6 Q21 14.2 22.4 15.6 L39 31.8 Z" fill="#eef5fd"/></svg>
<svg style="left:500px;top:366px" width="42" height="33" viewBox="0 0 42 33"><defs><linearGradient id="fvid" x1="0" y1="0" x2="1" y2="1"><stop offset="0" stop-color="#b27ef2"/><stop offset="1" stop-color="#8a44e2"/></linearGradient></defs>
<path d="M1.6 0 H13.5 Q14.8 0 15.6 1.1 L17.6 4 H40.4 Q42 4 42 5.6 V31 Q42 32.6 40.4 32.6 H1.6 Q0 32.6 0 31 V1.6 Q0 0 1.6 0 Z" fill="#7e55c2"/>
<path d="M0 7.6 H13.2 Q14.3 7.6 15.2 6.7 L16.6 5.4 H42 V31 Q42 32.6 40.4 32.6 H1.6 Q0 32.6 0 31 Z" fill="url(#fvid)"/>
<path d="M0 30.8 Q0 32.6 1.6 32.6 H40.4 Q42 32.6 42 30.8 V31.6 Q42 32.6 40.4 32.6 H1.6 Q0 32.6 0 31.6 Z" fill="#000" opacity="0.2"/>
<rect x="0.5" y="31.6" width="41" height="1" fill="#000" opacity="0.18"/>
<rect x="3.1" y="10" width="4.9" height="4.8" fill="#4a2a84"/><rect x="3.1" y="17.1" width="4.9" height="4.7" fill="#4a2a84"/><rect x="3.1" y="24" width="4.9" height="4.8" fill="#4a2a84"/><rect x="34.1" y="10" width="4.9" height="4.8" fill="#4a2a84"/><rect x="34.1" y="17.1" width="4.9" height="4.7" fill="#4a2a84"/><rect x="34.1" y="24" width="4.9" height="4.8" fill="#4a2a84"/><path d="M15.8 11.5 V26.5 L28 19 Z" fill="#f4f4f4"/></svg>
<div class="t" style="left:266.20px;top:249px;font-size:12px;line-height:12px;color:#000;letter-spacing:-0.233px;">Desktop</div>
<div class="t" style="left:266.20px;top:309px;font-size:12px;line-height:12px;color:#000;letter-spacing:-0.025px;">Downloads</div>
<div class="t" style="left:266.20px;top:369px;font-size:12px;line-height:12px;color:#000;letter-spacing:-0.171px;">Pictures</div>
<div class="t" style="left:550.40px;top:249px;font-size:12px;line-height:12px;color:#000;letter-spacing:-0.112px;">Documents</div>
<div class="t" style="left:550.40px;top:309px;font-size:12px;line-height:12px;color:#000;letter-spacing:0.075px;">Music</div>
<div class="t" style="left:550.40px;top:369px;font-size:12px;line-height:12px;color:#000;letter-spacing:-0.320px;">Videos</div>
<svg style="left:460px;top:255px" width="18" height="16" viewBox="0 0 18 16"><path d="M5.5 12.5 Q3 12.5 3 10.2 Q3 8 5.3 7.8 Q6 4.5 9.3 4.5 Q12.3 4.5 13 7.5 Q15.5 7.7 15.5 10.1 Q15.5 12.5 13 12.5 Z" fill="none" stroke="#1477d4" stroke-width="1.2"/></svg>
<svg style="left:216.4px;top:461.2px" width="41" height="22" viewBox="0 0 41 22"><defs><linearGradient id="dfr" x1="0" y1="0" x2="0" y2="1"><stop offset="0" stop-color="#2b2b2b"/><stop offset="1" stop-color="#5c5c5c"/></linearGradient>
<radialGradient id="led" cx="0.5" cy="0.5" r="0.5"><stop offset="0" stop-color="#9dff9d"/><stop offset="0.5" stop-color="#2fd42f"/><stop offset="1" stop-color="#1a8a1a"/></radialGradient></defs><path d="M8.7 0 H32.2 L41 8.6 H0 Z" fill="#e2e3e6"/><rect x="0" y="8.2" width="41" height="1" fill="#f4f4f4"/><rect x="0" y="8.6" width="41" height="12.6" rx="1.3" fill="url(#dfr)"/><circle cx="6.3" cy="14.8" r="2" fill="url(#led)"/><path d="M-1.5 -10.3 L4.5 -11.2 V-4.2 H-1.5 Z M5.6 -11.4 L14.6 -12.7 V-4.2 H5.6 Z M-1.5 -3 H4.5 V4 L-1.5 3.1 Z M5.6 -3 H14.6 V5.6 L5.6 4.3 Z" fill="#0078d7"/></svg>
<div class="t" style="left:266.40px;top:449px;font-size:12px;line-height:12px;color:#000;letter-spacing:-0.819px;word-spacing:1.00px;">C System SSD (C:)</div>
<div class="a" style="left:265px;top:464px;width:185px;height:13px;background:#e6e6e6;border:1px solid #bcbcbc;"></div>
<div class="a" style="left:266px;top:465px;width:143px;height:11px;background:#26a0da;"></div>
<div class="t" style="left:266.40px;top:480px;font-size:12px;line-height:12px;color:#6d6d6d;letter-spacing:-0.695px;word-spacing:1.00px;">25,4 GB free of 117 GB</div>
<svg style="left:500.6px;top:461.2px" width="41" height="22" viewBox="0 0 41 22"><defs><linearGradient id="dfr" x1="0" y1="0" x2="0" y2="1"><stop offset="0" stop-color="#2b2b2b"/><stop offset="1" stop-color="#5c5c5c"/></linearGradient>
<radialGradient id="led" cx="0.5" cy="0.5" r="0.5"><stop offset="0" stop-color="#9dff9d"/><stop offset="0.5" stop-color="#2fd42f"/><stop offset="1" stop-color="#1a8a1a"/></radialGradient></defs><path d="M8.7 0 H32.2 L41 8.6 H0 Z" fill="#e2e3e6"/><rect x="0" y="8.2" width="41" height="1" fill="#f4f4f4"/><rect x="0" y="8.6" width="41" height="12.6" rx="1.3" fill="url(#dfr)"/><circle cx="6.3" cy="14.8" r="2" fill="url(#led)"/></svg>
<div class="t" style="left:550.40px;top:449px;font-size:12px;line-height:12px;color:#000;letter-spacing:-0.520px;word-spacing:1.00px;">D Misc (D:)</div>
<div class="a" style="left:549px;top:464px;width:185px;height:13px;background:#e6e6e6;border:1px solid #bcbcbc;"></div>
<div class="a" style="left:550px;top:465px;width:87px;height:11px;background:#26a0da;"></div>
<div class="t" style="left:550.40px;top:480px;font-size:12px;line-height:12px;color:#6d6d6d;letter-spacing:-0.800px;word-spacing:1.00px;">482 GB free of 931 GB</div>
<svg style="left:216.4px;top:521.2px" width="41" height="22" viewBox="0 0 41 22"><defs><linearGradient id="dfr" x1="0" y1="0" x2="0" y2="1"><stop offset="0" stop-color="#2b2b2b"/><stop offset="1" stop-color="#5c5c5c"/></linearGradient>
<radialGradient id="led" cx="0.5" cy="0.5" r="0.5"><stop offset="0" stop-color="#9dff9d"/><stop offset="0.5" stop-color="#2fd42f"/><stop offset="1" stop-color="#1a8a1a"/></radialGradient></defs><path d="M8.7 0 H32.2 L41 8.6 H0 Z" fill="#e2e3e6"/><rect x="0" y="8.2" width="41" height="1" fill="#f4f4f4"/><rect x="0" y="8.6" width="41" height="12.6" rx="1.3" fill="url(#dfr)"/><circle cx="6.3" cy="14.8" r="2" fill="url(#led)"/></svg>
<div class="t" style="left:266.40px;top:509px;font-size:12px;line-height:12px;color:#000;letter-spacing:-0.573px;word-spacing:1.00px;">F Warehouse (F:)</div>
<div class="a" style="left:265px;top:524px;width:185px;height:13px;background:#e6e6e6;border:1px solid #bcbcbc;"></div>
<div class="a" style="left:266px;top:525px;width:89px;height:11px;background:#26a0da;"></div>
<div class="t" style="left:266.40px;top:540px;font-size:12px;line-height:12px;color:#6d6d6d;letter-spacing:-0.790px;word-spacing:1.00px;">482 GB free of 947 GB</div>
<svg style="left:500.6px;top:521.2px" width="41" height="22" viewBox="0 0 41 22"><defs><linearGradient id="dfr" x1="0" y1="0" x2="0" y2="1"><stop offset="0" stop-color="#2b2b2b"/><stop offset="1" stop-color="#5c5c5c"/></linearGradient>
<radialGradient id="led" cx="0.5" cy="0.5" r="0.5"><stop offset="0" stop-color="#9dff9d"/><stop offset="0.5" stop-color="#2fd42f"/><stop offset="1" stop-color="#1a8a1a"/></radialGradient></defs><path d="M8.7 0 H32.2 L41 8.6 H0 Z" fill="#e2e3e6"/><rect x="0" y="8.2" width="41" height="1" fill="#f4f4f4"/><rect x="0" y="8.6" width="41" height="12.6" rx="1.3" fill="url(#dfr)"/><circle cx="6.3" cy="14.8" r="2" fill="url(#led)"/></svg>
<div class="t" style="left:550.40px;top:509px;font-size:12px;line-height:12px;color:#000;letter-spacing:-0.465px;word-spacing:1.00px;">G MediaSecond (G:)</div>
<div class="a" style="left:549px;top:524px;width:185px;height:13px;background:#e6e6e6;border:1px solid #bcbcbc;"></div>
<div class="a" style="left:550px;top:525px;width:161px;height:11px;background:#26a0da;"></div>
<div class="t" style="left:550.40px;top:540px;font-size:12px;line-height:12px;color:#6d6d6d;letter-spacing:-0.757px;word-spacing:1.00px;">218 GB free of 1,81 TB</div>
<svg style="left:216.4px;top:581.2px" width="41" height="22" viewBox="0 0 41 22"><defs><linearGradient id="dfr" x1="0" y1="0" x2="0" y2="1"><stop offset="0" stop-color="#2b2b2b"/><stop offset="1" stop-color="#5c5c5c"/></linearGradient>
<radialGradient id="led" cx="0.5" cy="0.5" r="0.5"><stop offset="0" stop-color="#9dff9d"/><stop offset="0.5" stop-color="#2fd42f"/><stop offset="1" stop-color="#1a8a1a"/></radialGradient></defs><path d="M8.7 0 H32.2 L41 8.6 H0 Z" fill="#e2e3e6"/><rect x="0" y="8.2" width="41" height="1" fill="#f4f4f4"/><rect x="0" y="8.6" width="41" height="12.6" rx="1.3" fill="url(#dfr)"/><circle cx="6.3" cy="14.8" r="2" fill="url(#led)"/></svg>
<div class="t" style="left:266.40px;top:569px;font-size:12px;line-height:12px;color:#000;letter-spacing:-0.255px;word-spacing:1.00px;">H Media (H:)</div>
<div class="a" style="left:265px;top:584px;width:185px;height:13px;background:#e6e6e6;border:1px solid #bcbcbc;"></div>
<div class="a" style="left:266px;top:585px;width:148px;height:11px;background:#26a0da;"></div>
<div class="t" style="left:266.40px;top:600px;font-size:12px;line-height:12px;color:#6d6d6d;letter-spacing:-0.738px;word-spacing:1.00px;">352 GB free of 1,81 TB</div>
<svg style="left:500.6px;top:581.2px" width="41" height="22" viewBox="0 0 41 22"><defs><linearGradient id="dfr" x1="0" y1="0" x2="0" y2="1"><stop offset="0" stop-color="#2b2b2b"/><stop offset="1" stop-color="#5c5c5c"/></linearGradient>
<radialGradient id="led" cx="0.5" cy="0.5" r="0.5"><stop offset="0" stop-color="#9dff9d"/><stop offset="0.5" stop-color="#2fd42f"/><stop offset="1" stop-color="#1a8a1a"/></radialGradient></defs><path d="M8.7 0 H32.2 L41 8.6 H0 Z" fill="#e2e3e6"/><rect x="0" y="8.2" width="41" height="1" fill="#f4f4f4"/><rect x="0" y="8.6" width="41" height="12.6" rx="1.3" fill="url(#dfr)"/><circle cx="6.3" cy="14.8" r="2" fill="url(#led)"/></svg>
<div class="t" style="left:550.40px;top:569px;font-size:12px;line-height:12px;color:#000;letter-spacing:-1.120px;word-spacing:1.00px;">J SSD Games (J:)</div>
<div class="a" style="left:549px;top:584px;width:185px;height:13px;background:#e6e6e6;border:1px solid #bcbcbc;"></div>
<div class="a" style="left:550px;top:585px;width:122px;height:11px;background:#26a0da;"></div>
<div class="t" style="left:550.40px;top:600px;font-size:12px;line-height:12px;color:#6d6d6d;letter-spacing:-0.752px;word-spacing:1.00px;">67,5 GB free of 207 GB</div>
<svg style="left:210px;top:660px" width="55" height="45" viewBox="0 0 55 45">
<defs><linearGradient id="nd1" x1="0" y1="0" x2="0" y2="1"><stop offset="0" stop-color="#232323"/><stop offset="1" stop-color="#4c4c4c"/></linearGradient>
<linearGradient id="nd2" x1="0" y1="0" x2="0" y2="1"><stop offset="0" stop-color="#bdbdbd"/><stop offset="1" stop-color="#7d7d7d"/></linearGradient></defs>
<path d="M15 8.4 H38.7 L47.6 16.8 H6.4 Z" fill="#c2c2c2"/>
<rect x="6.4" y="16.6" width="41.2" height="12.5" rx="1" fill="url(#nd1)"/>
<circle cx="12.9" cy="22.7" r="1.7" fill="#aaa"/>
<rect x="6.4" y="30.5" width="41.2" height="8.2" rx="0.8" fill="url(#nd2)"/>
<rect x="6.4" y="31.2" width="6" height="6.8" fill="#b8b8b8"/>
<rect x="12.4" y="30.5" width="0.8" height="8.2" fill="#6a6a6a"/>
<path d="M28.9 19.6 L49.3 40.1 M49.3 19.6 L28.9 40.1" stroke="#fff" stroke-width="4.4" opacity="0.75"/>
<path d="M28.9 19.6 L49.3 40.1 M49.3 19.6 L28.9 40.1" stroke="#e2561c" stroke-width="2.5"/>
</svg>
<div class="t" style="left:266.60px;top:663px;font-size:12px;line-height:12px;color:#000;letter-spacing:-0.120px;word-spacing:1.00px;">Ubuntu-20.04 (\\wsl$) (Z:)</div>
<div class="t" style="left:15.70px;top:785px;font-size:12px;line-height:12px;color:#1a1a1a;letter-spacing:-0.486px;word-spacing:1.00px;">13 items</div>
<div class="a" style="left:69px;top:785px;width:1px;height:12px;background:#e5e5e5;"></div>
<div class="t" style="left:80.30px;top:785px;font-size:12px;line-height:12px;color:#1a1a1a;letter-spacing:-0.350px;word-spacing:1.00px;">1 item selected</div>
<div class="a" style="left:169px;top:785px;width:1px;height:12px;background:#e5e5e5;"></div>
<svg style="left:930px;top:775px" width="53" height="28" viewBox="0 0 53 28">
<rect x="7.4" y="7.4" width="15.3" height="15" fill="#f3f3f3"/>
<rect x="9" y="9.6" width="12" height="1.3" fill="#111"/><rect x="9" y="12.6" width="12" height="1.3" fill="#111"/><rect x="9" y="15.6" width="12" height="1.3" fill="#111"/><rect x="9" y="18.6" width="12" height="1.3" fill="#111"/>
<rect x="29.3" y="7.4" width="15" height="15" fill="#f3f3f3"/>
<rect x="31.5" y="9.5" width="11" height="8.5" fill="#fff" stroke="#111" stroke-width="1.2"/>
<rect x="31" y="19.5" width="12" height="1" fill="#111"/>
</svg>
</body></html>
